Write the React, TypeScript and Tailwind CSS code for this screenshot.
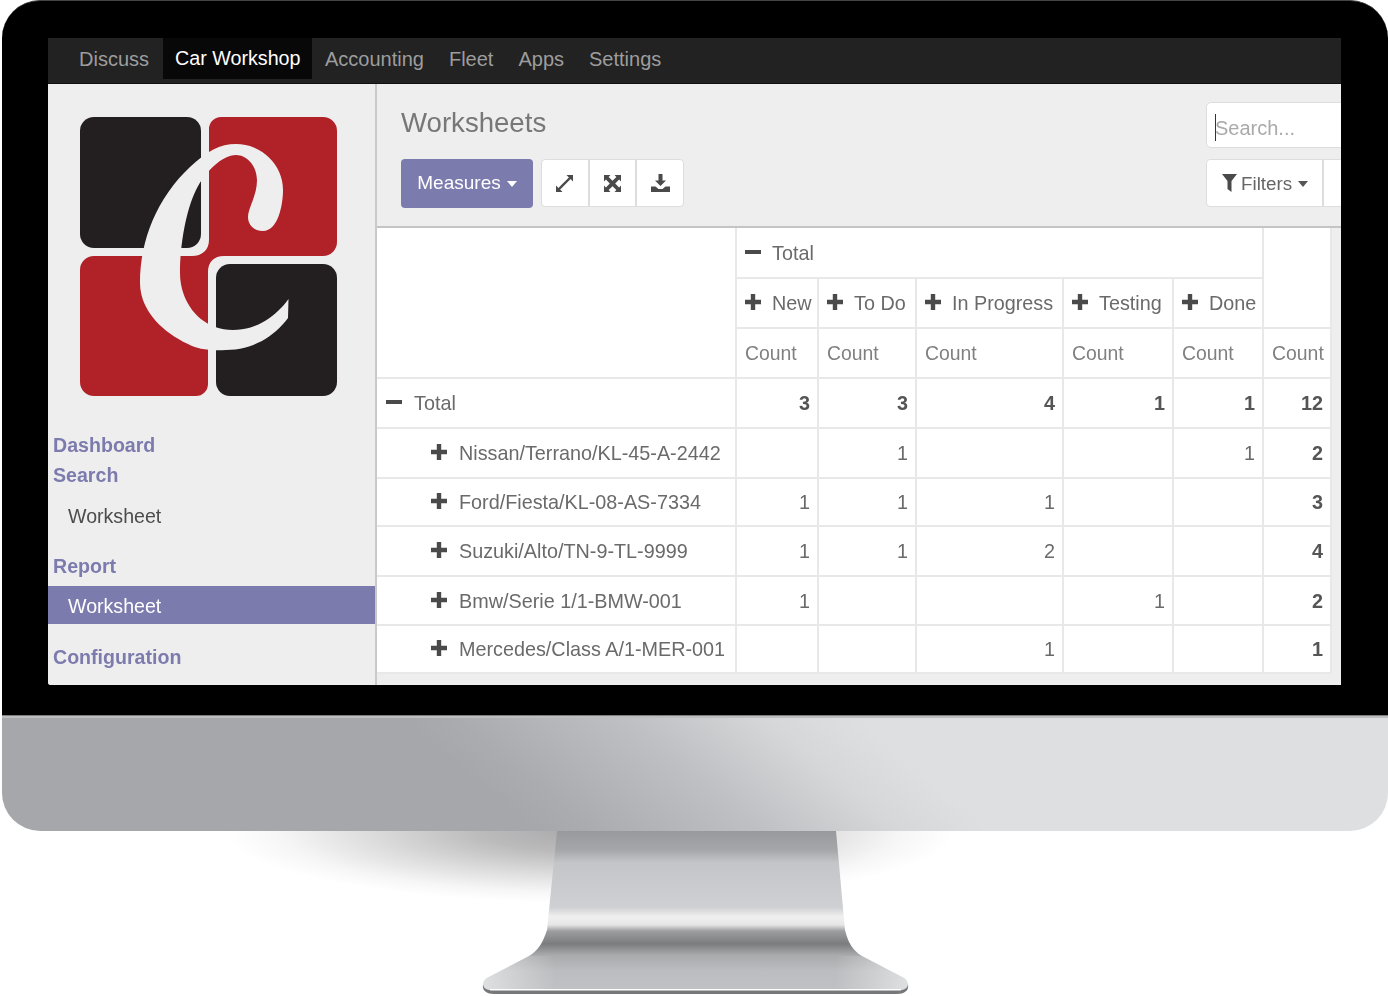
const navItems = ["Accounting", "Fleet", "Apps", "Settings"];

const rows = [
  { label: "Nissan/Terrano/KL-45-A-2442", h: "h-[50px]", cells: ["", "1", "", "", "1", "2"] },
  { label: "Ford/Fiesta/KL-08-AS-7334", h: "h-[48px]", cells: ["1", "1", "1", "", "", "3"] },
  { label: "Suzuki/Alto/TN-9-TL-9999", h: "h-[50px]", cells: ["1", "1", "2", "", "", "4"] },
  { label: "Bmw/Serie 1/1-BMW-001", h: "h-[49px]", cells: ["1", "", "", "1", "", "2"] },
  { label: "Mercedes/Class A/1-MER-001", h: "h-[48px]", cells: ["", "", "1", "", "", "1"] },
];

const stages = ["New", "To Do", "In Progress", "Testing", "Done"];
const totals = ["3", "3", "4", "1", "1", "12"];

function Plus() {
  return (
    <svg width="16" height="16" viewBox="0 0 16 16" className="shrink-0 -translate-y-[2px]" fill="#4a4a4a">
      <path d="M5.800 0h4.400v5.800H16v4.400h-5.800V16H5.800v-5.800H0V5.800h5.800z" />
    </svg>
  );
}

function Minus() {
  return (
    <svg width="16" height="16" viewBox="0 0 16 16" className="shrink-0 -translate-y-[2px]" fill="#4a4a4a">
      <rect y="6" width="16" height="4" />
    </svg>
  );
}

function Caret({ color }: { color: string }) {
  return <span className={`inline-block w-0 h-0 border-x-[5.5px] border-x-transparent border-t-[6px] ${color}`} />;
}

function Logo() {
  return (
    <svg width="257" height="279" viewBox="80 117 257 279" className="block">
      <rect x="80" y="117" width="121" height="131" rx="14" fill="#231f20" />
      <rect x="216" y="264" width="121" height="132" rx="14" fill="#231f20" />
      <path
        d="M221 117H323a14 14 0 0 1 14 14V242a14 14 0 0 1-14 14H224C214 256 208 262 208 272V384a12 12 0 0 1-12 12H94a14 14 0 0 1-14-14V270a14 14 0 0 1 14-14H192C202 256 209 250 209 240V129a12 12 0 0 1 12-12Z"
        fill="#b12228"
      />
      <path
        d="M288.500 299L288 318C274 337 252 350 226 350C209 351 197 349 188 344C158 330 140 307 140 283C140 240 157 198 190 167C207 151 220 144 236 144C262 144 283 165 283 190C283 205 278 231 263 231C254 231 248 225 248 217C248 208 257 196 257 180C257 166 247 155 236 155C222 155 205 172 196 190C186 210 180 245 180 273C180 302 200 330 233 330C258 330 277 315 288.500 299Z"
        fill="#efeeef"
      />
    </svg>
  );
}

function Sidebar() {
  return (
    <aside className="w-[329px] shrink-0 border-r-2 border-[#c9c9cd] bg-[#efeeef] pt-[33px]">
      <div className="pl-[32px]">
        <Logo />
      </div>
      <div className="mt-[34px] text-[19.6px]">
        <div className="h-[30px] pl-[5px] leading-[30px] font-bold text-[#7c7bad]">Dashboard</div>
        <div className="h-[30px] pl-[5px] leading-[30px] font-bold text-[#7c7bad]">Search</div>
        <div className="mt-[7px] h-[38px] pl-[20px] leading-[38px] text-[#4c4c4c]">Worksheet</div>
        <div className="mt-[16px] h-[30px] pl-[5px] leading-[30px] font-bold text-[#7c7bad]">Report</div>
        <div className="mt-[5px] h-[38px] bg-[#7c7bad] pl-[20px] leading-[41px] text-white">Worksheet</div>
        <div className="mt-[18px] h-[30px] pl-[5px] leading-[30px] font-bold text-[#7c7bad]">Configuration</div>
      </div>
    </aside>
  );
}

function ControlPanel() {
  return (
    <div className="flex h-[144px] justify-between border-b-2 border-[#c4c4c4] bg-[#efeeef]">
      <div className="pl-[24px] pt-[18px]">
        <div className="h-[40px] text-[27.6px] leading-[41px] text-[#777777]">Worksheets</div>
        <div className="mt-[17px] flex items-start gap-[8px]">
          <button className="flex h-[49px] w-[132px] items-center justify-center gap-[6px] rounded-[4px] bg-[#7c7bad] text-[19px] text-white">
            Measures
            <Caret color="border-t-white" />
          </button>
          <div className="flex h-[48px] w-[143px] rounded-[4px] border border-[#dddddd] bg-white">
            <button className="flex flex-1 items-center justify-center border-r-2 border-[#dddddd]">
              <svg width="17" height="17" viewBox="0 0 17 17" fill="#4a4a4a">
                <path d="M10.500 0H17v6.500L14.600 4.100 4.100 14.600 6.500 17H0v-6.500l2.400 2.400L12.900 2.400z" />
              </svg>
            </button>
            <button className="flex flex-1 items-center justify-center border-r-2 border-[#dddddd]">
              <svg width="17" height="17" viewBox="0 0 17 17" fill="#4a4a4a">
                <path d="M0 0h6.500L4.600 1.900 8.500 5.800l3.900-3.900L10.500 0H17v6.500l-1.900-1.900-3.900 3.900 3.900 3.900 1.900-1.900V17h-6.500l1.900-1.900-3.900-3.900-3.900 3.900L6.500 17H0v-6.500l1.900 1.900 3.900-3.900-3.900-3.900L0 6.500z" />
              </svg>
            </button>
            <button className="flex flex-1 items-center justify-center">
              <svg width="19" height="18" viewBox="0 0 19 18" fill="#4a4a4a">
                <path d="M7.500 0h4v6.500H15L9.500 12 4 6.500h3.500zM0 12.500h4.500l3 2.500h4l3-2.500H19V18H0z" />
              </svg>
            </button>
          </div>
        </div>
      </div>
      <div className="w-[135px] shrink-0 overflow-hidden pt-[18px]">
        <div className="flex h-[46px] w-[160px] items-center rounded-[5px] border border-[#dddddd] bg-white pl-[8px] pt-[5px] text-[20px] text-[#aaaaaa]">
          <span className="mr-[-1px] h-[27px] w-px bg-[#333333]" />
          Search...
        </div>
        <div className="mt-[11px] flex h-[48px] w-[160px] rounded-[4px] border border-[#dddddd] bg-white text-[18.8px] text-[#666666]">
          <div className="flex w-[117px] items-center gap-[4px] border-r-2 border-[#dddddd] pl-[15px] pt-[2px]">
            <svg width="15" height="18" viewBox="0 0 15 18" fill="#4a4a4a" className="shrink-0 -translate-y-[1px]">
              <path d="M0 0h15L9.500 7v11L5.500 15V7z" />
            </svg>
            <span>Filters</span>
            <span className="ml-[2px] flex">
              <Caret color="border-t-[#555555]" />
            </span>
          </div>
        </div>
      </div>
    </div>
  );
}

function PivotTable() {
  const cell = "border-2 border-[#e8e8e8] pt-[2px] text-[19.8px]";
  const value = `${cell} pr-[7px] text-right`;
  const colWidths = ["w-[359px]", "w-[82px]", "w-[98px]", "w-[147px]", "w-[110px]", "w-[90px]", "w-[68px]"];

  return (
    <table className="w-[954px] table-fixed border-collapse bg-white">
      <colgroup>
        {colWidths.map((w) => (
          <col key={w} className={w} />
        ))}
      </colgroup>
      <thead>
        <tr className="h-[50px]">
          <th rowSpan={3} className="border-y-0 border-r-2 border-[#e8e8e8]" />
          <th colSpan={5} className={`${cell} border-t-0 pl-[8px] text-left font-normal text-[#6a6a6a]`}>
            <div className="flex items-center gap-[11px]">
              <Minus />
              Total
            </div>
          </th>
          <th rowSpan={2} className="border-2 border-t-0 border-[#e8e8e8]" />
        </tr>
        <tr className="h-[50px]">
          {stages.map((s) => (
            <th key={s} className={`${cell} pl-[8px] text-left font-normal text-[#6a6a6a]`}>
              <div className="flex items-center gap-[11px] whitespace-nowrap">
                <Plus />
                {s}
              </div>
            </th>
          ))}
        </tr>
        <tr className="h-[50px]">
          {totals.map((_, i) => (
            <th key={i} className="border-2 border-[#e8e8e8] pl-[8px] pt-[2px] text-left text-[19.4px] font-normal text-[#808080]">
              Count
            </th>
          ))}
        </tr>
      </thead>
      <tbody>
        <tr className="h-[50px]">
          <td className={`${cell} border-l-0 pl-[9px] text-[#6a6a6a]`}>
            <div className="flex items-center gap-[12px]">
              <Minus />
              Total
            </div>
          </td>
          {totals.map((t, i) => (
            <td key={i} className={`${value} font-bold text-[#555555]`}>
              {t}
            </td>
          ))}
        </tr>
        {rows.map((row) => (
          <tr key={row.label} className={row.h}>
            <td className={`${cell} border-l-0 pl-[54px] text-[#6a6a6a]`}>
              <div className="flex items-center gap-[12px] whitespace-nowrap">
                <Plus />
                {row.label}
              </div>
            </td>
            {row.cells.map((c, i) => (
              <td key={i} className={i === 5 ? `${value} font-bold text-[#555555]` : `${value} text-[#6a6a6a]`}>
                {c}
              </td>
            ))}
          </tr>
        ))}
      </tbody>
    </table>
  );
}

function Stand() {
  return (
    <svg width="1388" height="165" viewBox="0 831 1388 165" className="block">
      <defs>
        <radialGradient id="shadow" cx="590" cy="831" r="1" gradientUnits="userSpaceOnUse" gradientTransform="translate(590 831) scale(365 72) translate(-590 -831)">
          <stop offset="0" stopColor="#a8a8aa" />
          <stop offset="0.3" stopColor="#bbbbbc" />
          <stop offset="0.6" stopColor="#dcdcdc" />
          <stop offset="0.85" stopColor="#f6f6f6" />
          <stop offset="1" stopColor="#ffffff" />
        </radialGradient>
        <linearGradient id="neck" x1="0" y1="831" x2="0" y2="990" gradientUnits="userSpaceOnUse">
          <stop offset="0" stopColor="#98999d" />
          <stop offset="0.12" stopColor="#a6a7aa" />
          <stop offset="0.2" stopColor="#c4c5c9" />
          <stop offset="0.48" stopColor="#cfd0d3" />
          <stop offset="0.54" stopColor="#f0f0f0" />
          <stop offset="0.59" stopColor="#e6e6e6" />
          <stop offset="0.63" stopColor="#9c9d9f" />
          <stop offset="0.71" stopColor="#7b7c7e" />
          <stop offset="0.78" stopColor="#a9aaac" />
          <stop offset="0.88" stopColor="#bcbdc0" />
          <stop offset="1" stopColor="#c0c1c4" />
        </linearGradient>
        <linearGradient id="baseGlow" x1="483" y1="0" x2="908" y2="0" gradientUnits="userSpaceOnUse">
          <stop offset="0" stopColor="#ffffff" stopOpacity="0.5" />
          <stop offset="0.17" stopColor="#ffffff" stopOpacity="0" />
          <stop offset="0.83" stopColor="#ffffff" stopOpacity="0" />
          <stop offset="1" stopColor="#ffffff" stopOpacity="0.5" />
        </linearGradient>
      </defs>
      <ellipse cx="590" cy="831" rx="365" ry="72" fill="url(#shadow)" />
      <path d="M483 985C482 990 486 994 494 994H897C905 994 909 990 908 985L904 982H487z" fill="#77787a" />
      <path
        d="M557 831H836L845 930C848 942 852 950 862 956L904 978C910 982 909 990 900 990H491C482 990 481 982 487 978L529 956C539 950 543 942 547 930z"
        fill="url(#neck)"
      />
      <path d="M529 956L487 978C481 982 482 990 491 990H900C909 990 910 982 904 978L862 956z" fill="url(#baseGlow)" />
      <rect x="490" y="989" width="411" height="1.500" fill="#ffffff" />
    </svg>
  );
}

export default function App() {
  return (
    <div className="h-[996px] w-[1388px] overflow-hidden bg-white font-['Liberation_Sans',Arial,sans-serif]">
      <div className="ml-[2px] w-[1386px]">
        <div className="rounded-t-[38px] border-b border-t border-b-[#7d7d7f] border-t-[#444444] bg-black pb-[30px] pl-[46px] pr-[47px] pt-[37px]">
          <div className="flex h-[647px] flex-col overflow-hidden rounded-bl-[3px] bg-[#efeeef] blur-[0.4px]">
            <nav className="flex h-[46px] shrink-0 items-start border-b border-[#111111] bg-[#222222] pl-[19px] text-[20px] text-[#9d9d9d]">
              <a className="flex h-[41px] items-center px-[12px] pt-[1px]">Discuss</a>
              <a className="ml-[2px] flex h-[41px] items-center bg-[#080808] px-[12px] pt-[1px] text-[19.7px] text-white">Car Workshop</a>
              {navItems.map((item) => (
                <a key={item} className="flex h-[41px] items-center px-[12.5px] pt-[1px]">
                  {item}
                </a>
              ))}
            </nav>
            <div className="flex min-h-0 flex-1">
              <Sidebar />
              <main className="min-w-0 flex-1">
                <ControlPanel />
                <PivotTable />
              </main>
            </div>
          </div>
        </div>
        <div className="h-[115px] rounded-b-[38px] border-t-2 border-[#bdbec0] bg-[linear-gradient(40deg,#a6a7aa_35%,#abacaf_39%,#bfc0c3_50%,#d6d7d9_59%,#dedfe1_65%)]" />
      </div>
      <Stand />
    </div>
  );
}
